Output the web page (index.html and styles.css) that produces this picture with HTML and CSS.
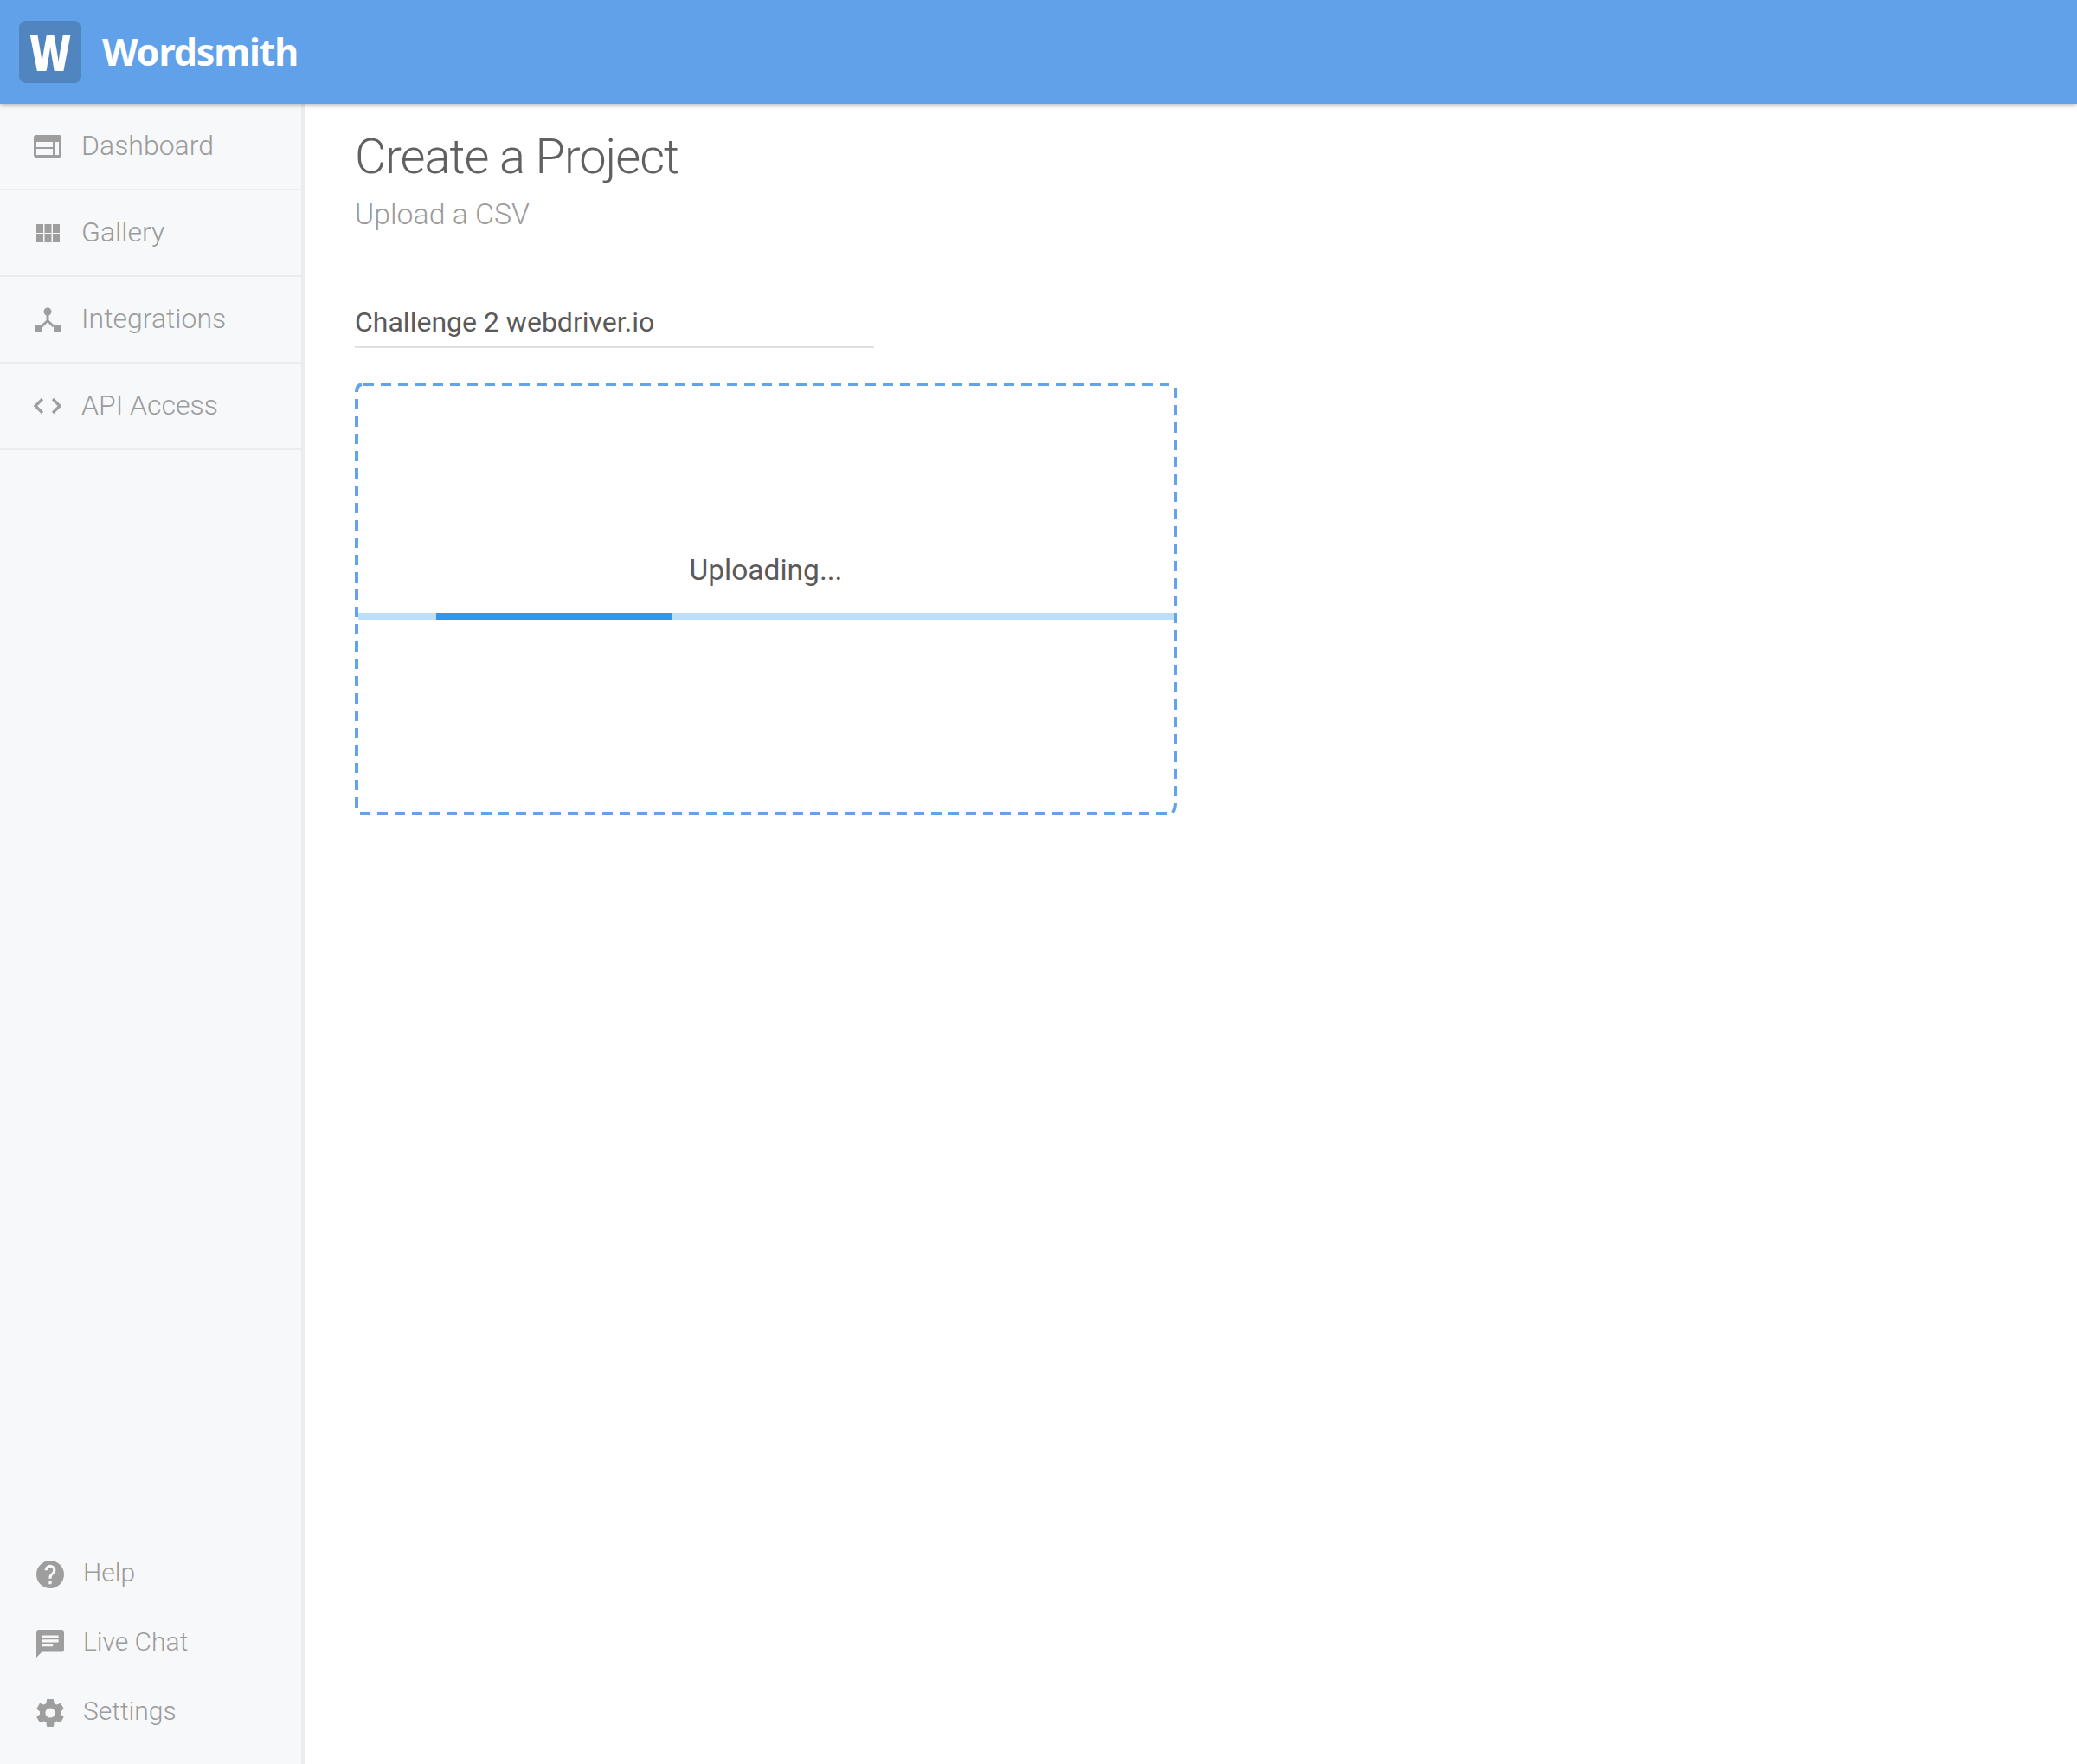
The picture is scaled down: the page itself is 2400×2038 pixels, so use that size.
FILE: index.html
```html
<!DOCTYPE html>
<html lang="en">
<head>
<meta charset="utf-8">
<title>Wordsmith</title>
<link rel="stylesheet" href="styles.css">
</head>
<body>
<header class="topbar">
  <div class="logo"><span class="logo-w">W</span></div>
  <div class="brand">Wordsmith</div>
</header>
<div class="shell">
  <aside class="sidebar">
    <nav class="nav">
      <a class="nav-item"><span class="nav-icon"><svg class="i-dash" viewBox="0 0 32 26"><path fill-rule="evenodd" d="M3 0h26a3 3 0 0 1 3 3v20a3 3 0 0 1-3 3H3a3 3 0 0 1-3-3V3a3 3 0 0 1 3-3zM3 8v6h19V8zM24 8v15h5V8zM3 16v7h19v-7z"/></svg></span><span class="label">Dashboard</span></a>
      <a class="nav-item"><span class="nav-icon"><svg class="i-grid" viewBox="0 0 27 21"><path d="M0 0h8v10H0zM9.500 0h8v10h-8zM19 0h8v10h-8zM0 11h8v10H0zM9.500 11h8v10h-8zM19 11h8v10h-8z"/></svg></span><span class="label">Gallery</span></a>
      <a class="nav-item"><span class="nav-icon"><svg class="i-int" viewBox="0 0 30 29"><circle cx="15" cy="5" r="4.500"/><path d="M13.500 8h3v7l6.500 6-2 2.200-6-5.600-6 5.600-2-2.200 6.500-6z"/><path d="M0 21h8v8H0zM22 21h8v8h-8z"/></svg></span><span class="label">Integrations</span></a>
      <a class="nav-item"><span class="nav-icon"><svg class="i-code" viewBox="0 0 32 20"><path d="M10 2 2 10l8 8M22 2l8 8-8 8" fill="none" stroke-width="3.200"/></svg></span><span class="label">API Access</span></a>
    </nav>
    <div class="foot">
      <a class="foot-item"><svg class="foot-icon" viewBox="2 2 20 20"><path d="M12 2a10 10 0 1 0 0 20 10 10 0 0 0 0-20zm1 17h-2v-2h2v2zm2.070-7.750-.9.920C13.450 12.900 13 13.500 13 15h-2v-.5c0-1.100.45-2.100 1.170-2.830l1.240-1.260c.37-.36.590-.86.590-1.410a2 2 0 1 0-4 0H8a4 4 0 1 1 8 0c0 .88-.36 1.680-.93 2.250z"/></svg><span class="label">Help</span></a>
      <a class="foot-item"><svg class="foot-icon" viewBox="2 2 20 20"><path d="M20 2H4a2 2 0 0 0-2 2v18l4-4h14a2 2 0 0 0 2-2V4a2 2 0 0 0-2-2zM6 9h12v2H6V9zm8 5H6v-2h8v2zm4-6H6V6h12v2z"/></svg><span class="label">Live Chat</span></a>
      <a class="foot-item"><svg class="foot-icon" viewBox="2 2 20 20"><path d="M19.430 12.980c.04-.32.070-.64.070-.98s-.03-.66-.07-.98l2.110-1.650c.19-.15.240-.42.120-.64l-2-3.460c-.12-.22-.39-.30-.61-.22l-2.490 1c-.52-.40-1.080-.73-1.690-.98l-.38-2.650A.488.488 0 0 0 14 2h-4c-.25 0-.46.180-.49.420l-.38 2.650c-.61.250-1.170.59-1.690.98l-2.490-1c-.23-.09-.49 0-.61.220l-2 3.460c-.13.220-.07.490.12.640l2.110 1.650c-.04.320-.07.650-.07.980s.03.660.07.980l-2.110 1.650c-.19.150-.24.420-.12.640l2 3.460c.12.220.39.300.61.220l2.490-1c.52.400 1.080.730 1.690.980l.38 2.650c.03.240.24.420.49.420h4c.25 0 .46-.18.490-.42l.38-2.650c.61-.25 1.170-.59 1.690-.98l2.490 1c.23.090.49 0 .61-.22l2-3.460c.12-.22.070-.49-.12-.64l-2.110-1.650zM12 15.500a3.500 3.500 0 1 1 0-7 3.500 3.500 0 0 1 0 7z"/></svg><span class="label">Settings</span></a>
    </div>
  </aside>
  <main class="content">
    <h1 class="title">Create a Project</h1>
    <p class="subtitle">Upload a CSV</p>
    <div class="name-field">Challenge 2 webdriver.io</div>
    <section class="dropzone">
      <svg class="dash" viewBox="0 0 950 500">
        <path class="side" d="M10 2H941"/>
        <path class="side" d="M948 6V478"/>
        <path class="side" d="M6 498H938"/>
        <path class="side" d="M2 19V491"/>
        <path d="M2 11C2 6 4 3 8 2"/>
        <path d="M948 486C948 491 947 494 945 497"/>
      </svg>
      <div class="status">Uploading...</div>
      <div class="track"><div class="fill"></div></div>
    </section>
  </main>
</div>
</body>
</html>
```
FILE: styles.css
```css
* { box-sizing: border-box; }
html, body { margin: 0; height: 100%; }
body {
  display: flex;
  flex-direction: column;
  height: 2038px;
  background: #fff;
  font-family: Roboto, "Liberation Sans", sans-serif;
  overflow: hidden;
}
.topbar {
  flex: 0 0 120px;
  display: flex;
  align-items: center;
  padding-left: 22px;
  background: #60a1e9;
  box-shadow: 0 2px 5px rgba(0, 0, 0, .25);
  position: relative;
  z-index: 2;
}
.logo {
  width: 72px;
  height: 72px;
  border-radius: 8px;
  background: #5085c0;
  color: #fff;
  font: 900 58px/72px "Noto Sans", sans-serif;
  text-align: center;
}
.logo-w { display: inline-block; transform: scaleX(.8); }
.brand {
  margin-left: 24px;
  margin-top: -2px;
  color: #fff;
  font: 700 43px/1 "Noto Sans", sans-serif;
  letter-spacing: -1.100px;
}
.shell { flex: 1; display: flex; min-height: 0; }
.sidebar {
  flex: 0 0 352px;
  display: flex;
  flex-direction: column;
  justify-content: space-between;
  background: #f6f8fa;
  border-right: 4px solid #ececec;
  color: #9b9b9b;
  font-weight: 300;
  font-size: 32px;
}
.label { padding-bottom: 2px; }
.nav-item {
  display: flex;
  align-items: center;
  height: 100px;
  border-bottom: 2px solid #ececec;
  padding-left: 38px;
}
.nav-icon {
  flex: 0 0 56px;
  display: flex;
  justify-content: center;
  padding-right: 22px;
}
.nav-icon svg { fill: #9e9e9e; stroke: #9e9e9e; stroke-width: 0; display: block; }
.i-dash { width: 32px; height: 26px; }
.i-grid { width: 27px; height: 21px; }
.i-int { width: 30px; height: 29px; }
.i-code { width: 32px; height: 20px; }
.foot { padding-bottom: 19px; }
.foot-item {
  display: flex;
  align-items: center;
  height: 80px;
  padding-left: 42px;
  font-size: 30px;
}
.foot-item .label { padding-bottom: 5px; }
.foot-icon { width: 32px; height: 32px; margin-right: 22px; fill: #9e9e9e; flex: none; }
.content { flex: 1; padding: 0 0 0 58px; }
.title {
  margin: 31px 0 0;
  font-weight: 300;
  font-size: 56px;
  line-height: 60px;
  letter-spacing: -1.050px;
  color: #616161;
}
.subtitle {
  margin: 17px 0 0;
  font-weight: 300;
  font-size: 33.800px;
  line-height: 40px;
  color: #9b9b9b;
}
.name-field {
  width: 600px;
  margin-top: 80px;
  height: 54px;
  border-bottom: 2px solid #e0e0e0;
  font-size: 32px;
  line-height: 48px;
  color: #5a5a5a;
}
.dropzone {
  position: relative;
  width: 950px;
  height: 500px;
  margin-top: 40px;
  padding: 190px 4px 0;
  text-align: center;
}
.dash {
  position: absolute;
  left: 0;
  top: 0;
  width: 950px;
  height: 500px;
  fill: none;
  stroke: #62a3ea;
  stroke-width: 4;
}
.side { stroke-dasharray: 12 8; }
.status {
  height: 76px;
  font-size: 33.500px;
  line-height: 54px;
  color: #5a5a5a;
}
.track { height: 8px; background: #bbdefb; padding-left: 90px; }
.fill { width: 272px; height: 8px; background: #2a98f0; }
```
